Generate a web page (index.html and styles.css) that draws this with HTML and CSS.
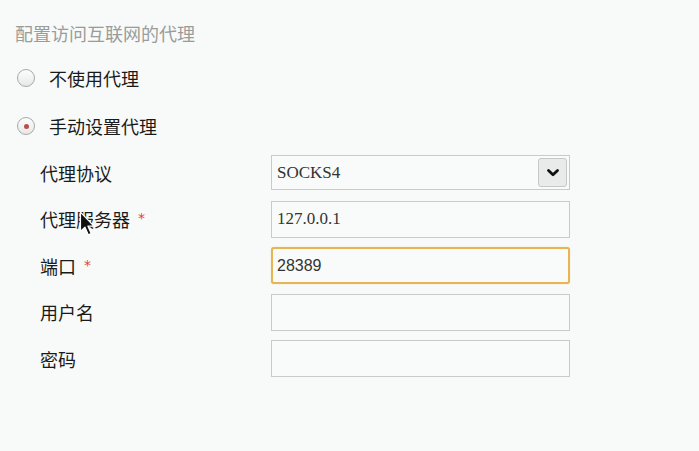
FILE: index.html
```html
<!DOCTYPE html>
<html lang="zh">
<head>
<meta charset="utf-8">
<link rel="stylesheet" href="styles.css">
</head>
<body>
<div class="page">
  <div class="title">配置访问互联网的代理</div>
  <div class="options">
    <label class="option"><span class="radio"></span><span class="opt-text">不使用代理</span></label>
    <label class="option"><span class="radio checked"></span><span class="opt-text">手动设置代理</span></label>
  </div>
  <div class="form">
    <div class="label">代理协议</div>
    <div class="select">
      <span class="select-value">SOCKS4</span>
      <span class="select-btn"><svg width="14" height="10" viewBox="0 0 14 10"><path d="M2.5 2.5 L7 6.8 L11.5 2.5" fill="none" stroke="#111" stroke-width="2.8" stroke-linecap="round" stroke-linejoin="round"/></svg></span>
    </div>
    <div class="label">代理服务器<span class="req">*</span></div>
    <div class="input">127.0.0.1</div>
    <div class="label">端口<span class="req">*</span></div>
    <div class="input focus">28389</div>
    <div class="label">用户名</div>
    <div class="input"></div>
    <div class="label">密码</div>
    <div class="input"></div>
  </div>
</div>
<svg class="cursor" width="18" height="26" viewBox="0 0 16 24"><path d="M1 1 L1 19 L5.2 15 L8.2 22 L11 20.8 L8 14 L13.5 14 Z" fill="#111" stroke="#fff" stroke-width="1.2" stroke-linejoin="round"/></svg>
</body>
</html>
```
FILE: styles.css
```css
html, body {
  margin: 0;
  padding: 0;
  background: #f7faf8;
  width: 699px;
  height: 451px;
  overflow: hidden;
}
body {
  position: relative;
  font-family: "Noto Sans CJK SC", "Noto Sans", sans-serif;
  color: #1a1a1a;
}
.page {
  padding: 22px 0 0 15px;
}
.title {
  font-size: 18px;
  line-height: 22px;
  color: #9a9c9b;
}
.options {
  margin-top: 10px;
  display: flex;
  flex-direction: column;
}
.option {
  height: 48px;
  display: flex;
  align-items: center;
  padding-left: 2px;
  gap: 14px;
  font-size: 18px;
}
.radio {
  width: 16px;
  height: 16px;
  border: 1px solid #a8a8a8;
  border-radius: 50%;
  background: linear-gradient(#fdfdfd, #e6e8e7);
  display: flex;
  align-items: center;
  justify-content: center;
}
.radio.checked::after {
  content: "";
  width: 5px;
  height: 5px;
  border-radius: 50%;
  background: #b8504f;
}
.form {
  margin-top: 6px;
  padding-left: 25px;
  display: grid;
  grid-template-columns: 231px 299px;
  grid-auto-rows: 37px;
  grid-template-rows: 35px;
  row-gap: 9.5px;
  align-items: center;
}
.form .label:first-child {
  margin-bottom: 1.5px;
}
.label {
  font-size: 18px;
  display: flex;
  align-items: center;
}
.req {
  color: #ee3b3b;
  font-family: "DejaVu Sans", sans-serif;
  font-size: 14px;
  margin-left: 8px;
  position: relative;
  top: -1px;
}
.select, .input {
  box-sizing: border-box;
  height: 100%;
  border: 1px solid #c9cbca;
  background: #f8fbf9;
  display: flex;
  align-items: center;
  padding-left: 5px;
  font-family: "Liberation Serif", serif;
  font-size: 17px;
  color: #333;
}
.select {
  height: 35px;
  justify-content: space-between;
  padding-right: 2px;
  margin-bottom: 2px;
}
.select-btn {
  width: 29px;
  height: 29px;
  box-sizing: border-box;
  border: 1px solid #c6c8c7;
  border-radius: 3px;
  background: #e8ebe9;
  display: flex;
  align-items: center;
  justify-content: center;
}
.input.focus {
  border: 2px solid #e9b453;
  border-radius: 3px;
  padding-left: 4px;
  font-family: "Liberation Sans", sans-serif;
  font-size: 16px;
  color: #333;
  box-shadow: 0 0 1px #f0c878;
}
.cursor {
  position: absolute;
  left: 79px;
  top: 211px;
}
```
